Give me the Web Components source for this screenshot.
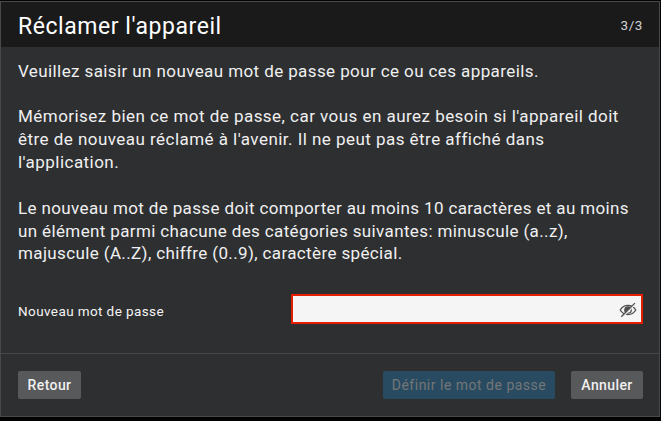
<!DOCTYPE html>
<html lang="fr">
<head>
<meta charset="utf-8">
<title>Réclamer l'appareil</title>
<style>
  html, body {
    height: 100%;
    margin: 0;
  }

  body {
    background: #020202;
    font-family: Roboto, "Liberation Sans", sans-serif;
    overflow: hidden;
  }
</style>
</head>
<body>
<claim-dialog></claim-dialog>

<script>
(function () {
  const define = (name, markup) => {
    const template = document.createElement("template");
    template.innerHTML = markup;

    customElements.define(
      name,
      class extends HTMLElement {
        constructor() {
          super();
          const shadow = this.attachShadow({ mode: "open" });
          shadow.appendChild(template.content.cloneNode(true));
        }
      },
    );
  };

  define("dialog-header", `
    <style>
      :host {
        align-items: center;
        background: #1a1a1a;
        box-sizing: border-box;
        color: #fff;
        display: flex;
        height: 45px;
        justify-content: space-between;
        padding: 4px 16px 0 17px;
      }

      h1 {
        font-size: 23px;
        font-weight: 400;
        letter-spacing: 0.55px;
        line-height: 32px;
        margin: 0;
      }

      .step {
        color: #d0d0d0;
        font-size: 13.5px;
        letter-spacing: 0.6px;
        padding-bottom: 3px;
      }
    </style>
    <h1><slot></slot></h1>
    <span class="step"><slot name="step"></slot></span>
  `);

  define("dialog-text", `
    <style>
      :host {
        color: #f0f0f0;
        display: block;
        font-size: 17px;
        letter-spacing: var(--text-spacing, 0.4px);
        line-height: 22.86px;
        margin-bottom: 22.86px;
        white-space: nowrap;
      }
    </style>
    <slot></slot>
  `);

  define("password-field", `
    <style>
      :host {
        align-items: center;
        display: flex;
        justify-content: space-between;
      }

      label {
        color: #f4f4f4;
        font-size: 13.5px;
        letter-spacing: 0.4px;
        padding-top: 5px;
      }

      .box {
        align-items: center;
        background: #f5f5f5;
        border: 2px solid #e61e00;
        box-sizing: border-box;
        display: flex;
        height: 30px;
        padding: 2px 4px 0 0;
        width: 352px;
      }

      input {
        background: transparent;
        border: 0;
        flex: 1;
        font: inherit;
        min-width: 0;
        outline: 0;
        padding: 0 6px;
      }

      button {
        background: none;
        border: 0;
        color: #505050;
        display: block;
        height: 18px;
        padding: 0;
        width: 18px;
      }

      svg {
        display: block;
      }
    </style>
    <label for="password"><slot></slot></label>
    <div class="box">
      <input id="password" type="password">
      <button type="button" aria-label="Afficher le mot de passe">
        <svg width="18" height="18" viewBox="0 0 18 18" aria-hidden="true" fill="none" stroke="currentColor" stroke-width="1.3">
          <path d="M1.200 9C3 6 5.800 4.400 9 4.400S15 6 16.800 9C15 12 12.200 13.600 9 13.600S3 12 1.200 9z"></path>
          <circle cx="9" cy="9" r="3.200"></circle>
          <path d="M9 5.800a3.200 3.200 0 0 0-2.300 5.500L11.300 6.700A3.200 3.200 0 0 0 9 5.800z" fill="currentColor" stroke="none"></path>
          <path d="M3.200 16.300 17 2.500" stroke="#f5f5f5" stroke-width="1.300"></path>
          <path d="M2.300 15.700 15.900 2.100"></path>
        </svg>
      </button>
    </div>
  `);

  define("dialog-button", `
    <style>
      :host {
        display: block;
      }

      button {
        background: #58595b;
        border: 0;
        border-radius: 2px;
        box-sizing: border-box;
        color: #f0f0f0;
        display: block;
        font: 500 14px/28px Roboto, "Liberation Sans", sans-serif;
        height: 28px;
        letter-spacing: 0.4px;
        padding: 0;
        text-align: center;
        white-space: nowrap;
        width: var(--button-width);
      }

      :host([disabled]) button {
        background: #294b61;
        color: #737678;
        font-weight: 400;
        letter-spacing: 0.5px;
      }
    </style>
    <button type="button"><slot></slot></button>
  `);

  define("dialog-footer", `
    <style>
      :host {
        border-top: 1px solid #48494b;
        box-sizing: border-box;
        display: flex;
        gap: 16px;
        height: 63px;
        padding: 17px 16px 0 17px;
      }

      .start {
        margin-right: auto;
      }
    </style>
    <div class="start"><slot name="start"></slot></div>
    <slot></slot>
  `);

  define("claim-dialog", `
    <style>
      :host {
        background: #2e2f31;
        border: 1px solid #48494b;
        box-sizing: border-box;
        display: flex;
        flex-direction: column;
        height: 416px;
        margin-top: 1px;
        width: 660px;
      }

      main {
        flex: 1;
        padding: 12.5px 16px 0 17px;
      }

      .reminder {
        --text-spacing: 0.46px;
      }

      .rules {
        --text-spacing: 0.37px;
      }

      password-field {
        margin-top: 28.5px;
      }

      .back {
        --button-width: 63px;
      }

      .submit {
        --button-width: 172px;
      }

      .cancel {
        --button-width: 72px;
      }
    </style>
    <dialog-header>Réclamer l'appareil<span slot="step">3/3</span></dialog-header>
    <main>
      <dialog-text>Veuillez saisir un nouveau mot de passe pour ce ou ces appareils.</dialog-text>
      <dialog-text class="reminder">Mémorisez bien ce mot de passe, car vous en aurez besoin si l'appareil doit<br>être de nouveau réclamé à l'avenir. Il ne peut pas être affiché dans<br>l'application.</dialog-text>
      <dialog-text class="rules">Le nouveau mot de passe doit comporter au moins 10 caractères et au moins<br>un élément parmi chacune des catégories suivantes: minuscule (a..z),<br>majuscule (A..Z), chiffre (0..9), caractère spécial.</dialog-text>
      <password-field>Nouveau mot de passe</password-field>
    </main>
    <dialog-footer>
      <dialog-button class="back" slot="start">Retour</dialog-button>
      <dialog-button class="submit" disabled>Définir le mot de passe</dialog-button>
      <dialog-button class="cancel">Annuler</dialog-button>
    </dialog-footer>
  `);
})();
</script>
</body>
</html>
